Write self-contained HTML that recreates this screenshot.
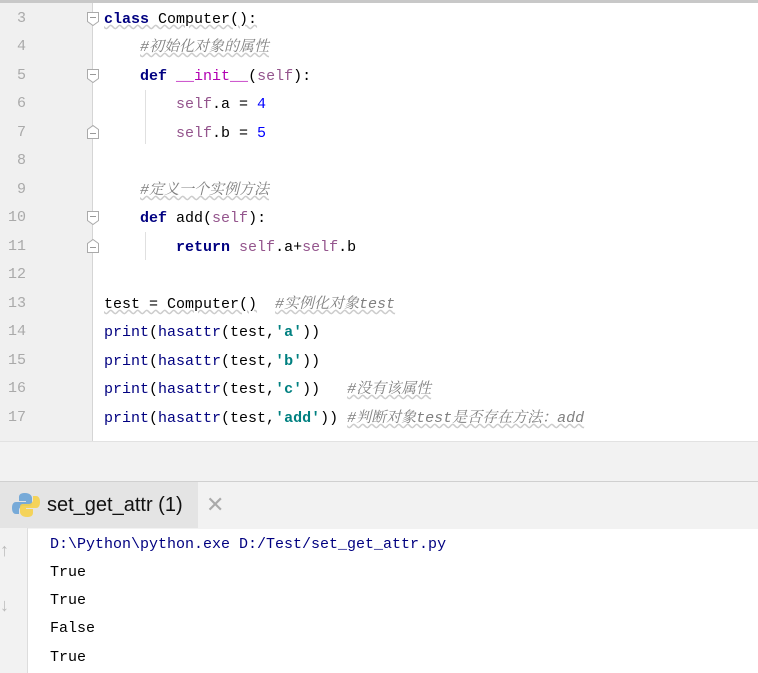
<!DOCTYPE html>
<html><head><meta charset="utf-8"><style>
body{margin:0;width:758px;height:673px;overflow:hidden;background:#fff;position:relative;font-family:"Liberation Mono","Noto Sans CJK SC",monospace;}
.top{position:absolute;left:0;top:0;width:758px;height:3px;background:#c8c8c8}
.gut{position:absolute;left:0;top:3px;width:92px;height:438px;background:#f0f0f0;border-right:1px solid #d5d5d5}
.ln{position:absolute;left:0;width:26px;text-align:right;font-size:15px;color:#aaa;font-family:"Liberation Mono",monospace}
.cl{position:absolute;left:104px;font-size:15px;color:#000;white-space:pre;line-height:18px}
.k{color:#000080;font-weight:bold}
.s{color:#94558d}
.n{color:#0000ff}
.c{color:#808080;font-style:italic;font-family:"Liberation Mono","Noto Serif CJK SC",monospace;text-decoration:underline wavy #ccc}
.str{color:#008080;font-weight:bold}
.w{text-decoration:underline wavy #ccc}
.fold{position:absolute;left:86px}
.guide{position:absolute;width:1px;background:#e0e0e0}
.gray{position:absolute;left:0;top:441px;width:758px;height:40px;background:#f2f2f2;border-top:1px solid #e2e2e2}
.tabbar{position:absolute;left:0;top:481px;width:758px;height:47px;background:#f2f2f2;border-top:1px solid #d0d0d0}
.tab{position:absolute;left:0;top:482px;width:198px;height:46px;background:#e4e4e4}
.tabt{position:absolute;left:47px;top:494px;font-family:"Liberation Sans",sans-serif;font-size:20px;color:#111}
.x{position:absolute;left:206px;top:492px;font-family:"Liberation Sans",sans-serif;font-size:22px;color:#aaa}
.cg{position:absolute;left:0;top:528px;width:27px;height:145px;background:#f2f2f2;border-right:1px solid #ddd}
.out{position:absolute;left:50px;font-size:15px;white-space:pre;color:#000}
</style></head><body>
<div class="top"></div>
<div class="gut"></div>
<div class="ln" style="top:10px">3</div>
<div class="ln" style="top:38px">4</div>
<div class="ln" style="top:67px">5</div>
<div class="ln" style="top:95px">6</div>
<div class="ln" style="top:124px">7</div>
<div class="ln" style="top:152px">8</div>
<div class="ln" style="top:181px">9</div>
<div class="ln" style="top:209px">10</div>
<div class="ln" style="top:238px">11</div>
<div class="ln" style="top:266px">12</div>
<div class="ln" style="top:295px">13</div>
<div class="ln" style="top:323px">14</div>
<div class="ln" style="top:352px">15</div>
<div class="ln" style="top:380px">16</div>
<div class="ln" style="top:409px">17</div>
<svg class="fold" style="top:11px" width="14" height="15"><path d="M1.5 1.5h11v9l-5.5 4l-5.5-4z" fill="#fff" stroke="#aaa"/><path d="M4 6.5h6" stroke="#999"/></svg>
<svg class="fold" style="top:68px" width="14" height="15"><path d="M1.5 1.5h11v9l-5.5 4l-5.5-4z" fill="#fff" stroke="#aaa"/><path d="M4 6.5h6" stroke="#999"/></svg>
<svg class="fold" style="top:125px" width="14" height="15"><path d="M1.5 13.5h11v-9l-5.5-4l-5.5 4z" fill="#fff" stroke="#aaa"/><path d="M4 8.5h6" stroke="#999"/></svg>
<svg class="fold" style="top:210px" width="14" height="15"><path d="M1.5 1.5h11v9l-5.5 4l-5.5-4z" fill="#fff" stroke="#aaa"/><path d="M4 6.5h6" stroke="#999"/></svg>
<svg class="fold" style="top:239px" width="14" height="15"><path d="M1.5 13.5h11v-9l-5.5-4l-5.5 4z" fill="#fff" stroke="#aaa"/><path d="M4 8.5h6" stroke="#999"/></svg>
<div class="guide" style="left:145px;top:90px;height:54px"></div>
<div class="guide" style="left:145px;top:232px;height:28px"></div>
<div class="cl" style="top:11px"><span class="k w">class</span><span class="w"> Computer():</span></div>
<div class="cl" style="top:39px">    <span class="c">#初始化对象的属性</span></div>
<div class="cl" style="top:68px">    <span class="k">def</span> <span style="color:#b200b2">__init__</span>(<span class="s">self</span>):</div>
<div class="cl" style="top:96px">        <span class="s">self</span>.a = <span class="n">4</span></div>
<div class="cl" style="top:125px">        <span class="s">self</span>.b = <span class="n">5</span></div>
<div class="cl" style="top:182px">    <span class="c">#定义一个实例方法</span></div>
<div class="cl" style="top:210px">    <span class="k">def</span> add(<span class="s">self</span>):</div>
<div class="cl" style="top:239px">        <span class="k">return</span> <span class="s">self</span>.a+<span class="s">self</span>.b</div>
<div class="cl" style="top:296px"><span class="w">test = Computer()</span>  <span class="c">#实例化对象test</span></div>
<div class="cl" style="top:324px"><span style="color:#000080">print</span>(<span style="color:#000080">hasattr</span>(test,<span class="str">'a'</span>))</div>
<div class="cl" style="top:353px"><span style="color:#000080">print</span>(<span style="color:#000080">hasattr</span>(test,<span class="str">'b'</span>))</div>
<div class="cl" style="top:381px"><span style="color:#000080">print</span>(<span style="color:#000080">hasattr</span>(test,<span class="str">'c'</span>))   <span class="c">#没有该属性</span></div>
<div class="cl" style="top:410px"><span style="color:#000080">print</span>(<span style="color:#000080">hasattr</span>(test,<span class="str">'add'</span>)) <span class="c">#判断对象test是否存在方法：add</span></div>
<div class="gray"></div>
<div class="tabbar"></div>
<div class="tab"></div>
<svg style="position:absolute;left:12px;top:491px" width="28" height="28" viewBox="0 0 28 28">
<path d="M13 2c-6 0-6 3-6 5v3h7v1H4c-3 0-4 3-4 6s1 6 4 6h3v-4c0-2 2-4 4-4h6c2 0 3-1 3-3V7c0-2-2-5-7-5z" fill="#5b9bd5" opacity=".8"/>
<path d="M15 26c6 0 6-3 6-5v-3h-7v-1h10c3 0 4-3 4-6s-1-6-4-6h-3v4c0 2-2 4-4 4h-6c-2 0-3 1-3 3v5c0 2 2 5 7 5z" fill="#f5d04a" opacity=".9"/>
</svg>
<div class="tabt">set_get_attr (1)</div>
<div class="x">✕</div>
<div class="cg"></div>
<div style="position:absolute;left:0;top:540px;color:#bbb;font-size:18px;font-family:'Liberation Sans',sans-serif">↑</div>
<div style="position:absolute;left:0;top:595px;color:#bbb;font-size:18px;font-family:'Liberation Sans',sans-serif">↓</div>
<div class="out" style="top:536px;color:#000080">D:\Python\python.exe D:/Test/set_get_attr.py</div>
<div class="out" style="top:564px">True</div>
<div class="out" style="top:592px">True</div>
<div class="out" style="top:620px">False</div>
<div class="out" style="top:649px">True</div>
</body></html>
